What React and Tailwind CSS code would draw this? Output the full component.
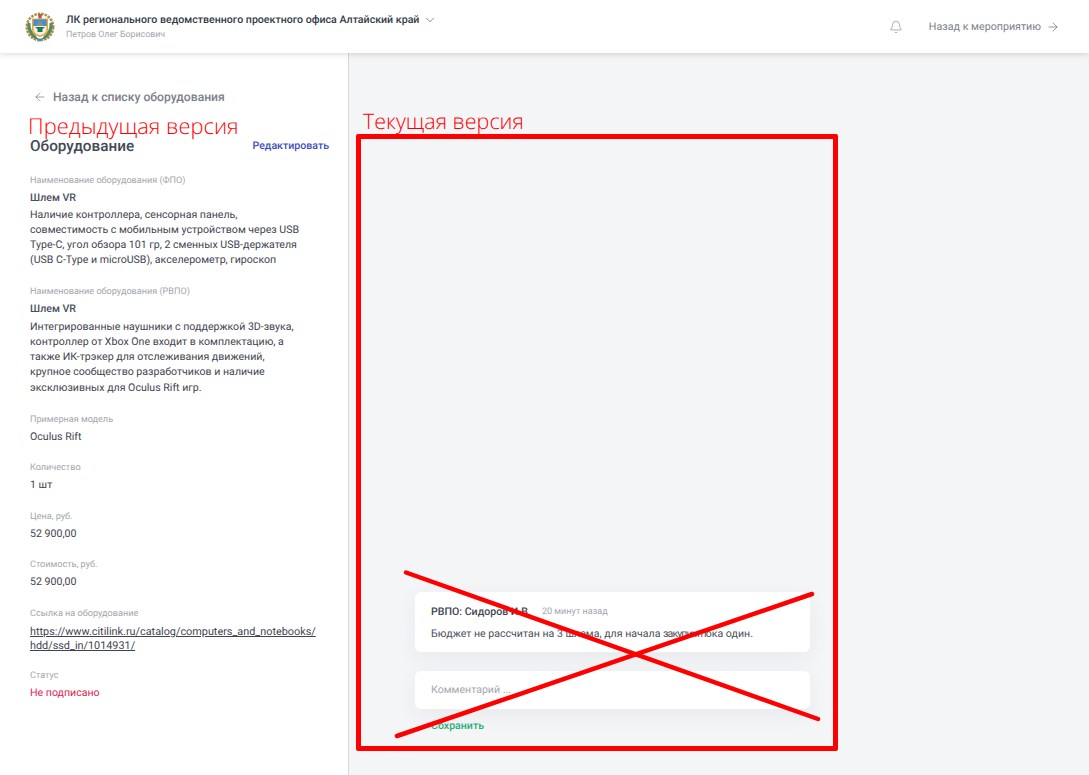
import React from 'react';
import { ChevronDown, Bell, ArrowLeft, ArrowRight } from 'lucide-react';

function Logo() {
  return (
    <svg width="30" height="30" viewBox="0 0 30 30" className="shrink-0">
      <circle cx="15" cy="15" r="13.2" fill="none" stroke="#a8924a" strokeWidth="2.6" strokeDasharray="2.5 1" />
      <path d="M2.5 11 Q1 20 9 26.5 L14 28 L11 24 Q5 19 5.5 11Z" fill="#5a8a5a" />
      <path d="M27.5 11 Q29 20 21 26.5 L16 28 L19 24 Q25 19 24.5 11Z" fill="#5a8a5a" />
      <path d="M7 6.5 H23 V18 Q23 23 15 25 Q7 23 7 18Z" fill="#e8a33a" />
      <path d="M8.5 7.5 H21.5 V14 H8.5Z" fill="#3f8fd2" />
      <path d="M8.5 14 H21.5 V18 Q21 21.5 15 23.5 Q9 21.5 8.5 18Z" fill="#f4efe0" />
      <path d="M11 14 L15 8 L19 14Z" fill="#8a8f98" />
      <path d="M10 15 H20 L17.5 17 V20 H12.5 V17Z" fill="#1d7d52" />
      <path d="M13 2 H17 L16.5 6.5 H13.5Z" fill="#b7584a" />
      <path d="M11 26.5 H19 L15 29.5Z" fill="#3f8fd2" />
    </svg>
  );
}

function Label({ children }) {
  return <div className="text-[9.1px] leading-[14px] text-[#a3a6ae]">{children}</div>;
}

function Field({ label, children, valueClass = 'text-[#3f4450]', className = '' }) {
  return (
    <div className={className}>
      <Label>{label}</Label>
      <div className={`mt-[2px] text-[10.6px] leading-[15px] ${valueClass}`}>{children}</div>
    </div>
  );
}

function Description({ label, lines, className = '', linesClass = 'mt-[2.5px]' }) {
  return (
    <div className={className}>
      <Label>{label}</Label>
      <div className="mt-[2px] text-[10.6px] leading-[15px] font-medium text-[#4a4f5b]">Шлем VR</div>
      <div className={`${linesClass} text-[10.6px] leading-[15.2px] text-[#3f4450]`}>
        {lines.map((line) => (
          <div key={line} className="whitespace-nowrap">{line}</div>
        ))}
      </div>
    </div>
  );
}

export default function App() {
  return (
    <div className="relative flex h-[775px] w-[1089px] flex-col overflow-hidden bg-[#f4f5f7] font-['Roboto',sans-serif] [text-rendering:geometricPrecision]">
      <header className="relative z-10 flex h-[53px] shrink-0 items-center bg-white pl-[25px] pr-[29px] shadow-[0_1px_6px_rgba(0,0,0,0.16)]">
        <Logo />
        <div className="ml-[11px] flex flex-col">
          <div className="flex items-center">
            <span className="text-[10.62px] font-medium leading-[14px] text-[#333a47]">
              ЛК регионального ведомственного проектного офиса Алтайский край
            </span>
            <ChevronDown className="ml-[4px] text-[#5d6270]" size={14} strokeWidth={1.25} />
          </div>
          <div className="mt-[2px] text-[8.8px] leading-[12px] text-[#a3a6ae]">Петров Олег Борисович</div>
        </div>
        <div className="ml-auto flex items-center">
          <Bell size={14} strokeWidth={1} className="text-[#6e7380]" />
          <span className="ml-[26px] text-[10.7px] leading-[14px] text-[#7b7f8b]">Назад к мероприятию</span>
          <ArrowRight size={14} strokeWidth={1.25} className="ml-[5px] text-[#6e7380]" />
        </div>
      </header>

      <div className="flex min-h-0 flex-1">
        <aside className="w-[349px] shrink-0 border-r border-[#d6d8dc] bg-white pl-[30px] pr-[19px] pt-[36px]">
          <div className="flex items-center">
            <ArrowLeft size={14} strokeWidth={1.25} className="ml-[3px] text-[#7b7f8b]" />
            <span className="ml-[6px] text-[12.15px] font-medium leading-[16px] text-[#7b7f8b]">Назад к списку оборудования</span>
          </div>
          <div className="mt-[32px] flex items-center justify-between">
            <h2 className="text-[15.3px] font-medium leading-[18px] text-[#444955]">Оборудование</h2>
            <span className="text-[10.6px] font-medium leading-[14px] text-[#3d4fb8]">Редактировать</span>
          </div>
          <div className="mt-[19px] flex flex-col">
            <Description
              className="mb-[18px]"
              linesClass="mt-[1.5px]"
              label="Наименование оборудования (ФПО)"
              lines={[
                'Наличие контроллера, сенсорная панель,',
                'совместимость с мобильным устройством через USB',
                'Type-C, угол обзора 101 гр, 2 сменных USB-держателя',
                '(USB C-Type и microUSB), акселерометр, гироскоп',
              ]}
            />
            <Description
              className="mb-[18.5px]"
              label="Наименование оборудования (РВПО)"
              lines={[
                'Интегрированные наушники с поддержкой 3D-звука,',
                'контроллер от Xbox One входит в комплектацию, а',
                'также ИК-трэкер для отслеживания движений,',
                'крупное сообщество разработчиков и наличие',
                'эксклюзивных для Oculus Rift игр.',
              ]}
            />
            <Field className="mb-[16.8px]" label="Примерная модель">Oculus Rift</Field>
            <Field className="mb-[17.8px]" label="Количество">1 шт</Field>
            <Field className="mb-[17.3px]" label="Цена, руб.">52 900,00</Field>
            <Field className="mb-[17.3px]" label="Стоимость, руб.">52 900,00</Field>
            <div className="mb-[15px]">
              <Label>Ссылка на оборудование</Label>
              <div className="mt-[4px] text-[10.85px] leading-[14.5px] text-[#3f4450]">
                <span className="underline">https://www.citilink.ru/catalog/computers_and_notebooks/</span>
                <br />
                <span className="underline">hdd/ssd_in/1014931/</span>
              </div>
            </div>
            <Field label="Статус" valueClass="text-[#e0244f]">Не подписано</Field>
          </div>
        </aside>

        <main className="flex flex-1 flex-col pl-[66px] pr-[279px] pt-[539px]">
          <div className="rounded-[6px] bg-white px-[16px] pb-[11px] pt-[13px] shadow-[0_6px_20px_rgba(40,50,70,0.06)]">
            <div className="flex items-center">
              <span className="text-[10.6px] font-medium leading-[14px] text-[#3f4450]">РВПО: Сидоров И.В.</span>
              <span className="ml-[11px] text-[9.1px] leading-[14px] text-[#a3a6ae]">20 минут назад</span>
            </div>
            <div className="mt-[7px] whitespace-nowrap text-[10.6px] leading-[15px] text-[#4a4f5b]">
              Бюджет не рассчитан на 3 шлема, для начала <span className="tracking-[-0.9px]">закупим п</span>ока один.
            </div>
          </div>
          <div className="mt-[19px] flex h-[38px] items-center rounded-[6px] bg-white px-[16px] text-[10.6px] text-[#a3a6ae] shadow-[0_6px_20px_rgba(40,50,70,0.06)]">
            Комментарий ...
          </div>
          <div className="ml-[16px] mt-[10px] text-[10.6px] font-medium leading-[14px] text-[#27ae7a]">Сохранить</div>
        </main>
      </div>

      <div className="absolute left-[28px] top-[113px] z-20 font-['Open_Sans',sans-serif] text-[21.9px] font-light leading-[28px] text-[#ff0000]">Предыдущая версия</div>
      <div className="absolute left-[363px] top-[108px] z-20 font-['Open_Sans',sans-serif] text-[21.5px] font-light leading-[28px] text-[#ff0000]">Текущая версия</div>
      <div className="absolute left-[356px] top-[134px] z-20 h-[617px] w-[482px] rounded-[2px] border-[5px] border-[#ff0000]" />
      <svg className="absolute left-0 top-0 z-20" width="1089" height="775" viewBox="0 0 1089 775" fill="none">
        <path d="M406 572.5 L818 719" stroke="#ff0000" strokeWidth="4.5" strokeLinecap="round" />
        <path d="M397 736 L812 594" stroke="#ff0000" strokeWidth="4.5" strokeLinecap="round" />
      </svg>
    </div>
  );
}
